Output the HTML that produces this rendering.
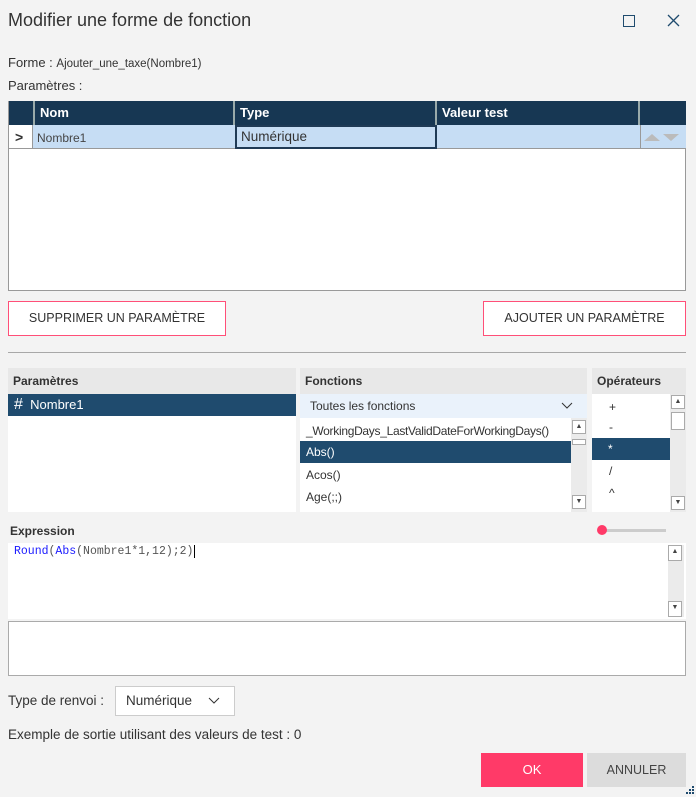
<!DOCTYPE html>
<html><head><meta charset="utf-8"><style>
*{box-sizing:border-box;margin:0;padding:0}
body{width:696px;height:797px;background:#f3f3f3;font-family:"Liberation Sans",sans-serif;color:#333;position:relative;overflow:hidden}
.a{position:absolute}
.t{font-size:12px;white-space:nowrap}
.hd{background:#173753;color:#fff;font-weight:bold;font-size:13px;line-height:24px;padding-left:5px;border-right:2px solid #9aa}
.sb{background:#ebebeb;position:absolute}
.arr{position:absolute;width:14px;height:14px;background:#fff;border:1px solid #aaa;font-size:7px;text-align:center;line-height:12px;color:#444}
.ph{background:#e8e8e8;font-weight:bold;font-size:12px;line-height:26px;padding-left:5px;color:#333}
</style></head><body>
<div class="a" style="left:8px;top:10px;font-size:18px;color:#333">Modifier une forme de fonction</div>
<div class="a" style="left:623px;top:15px;width:12px;height:12px;border:1.5px solid #1f4b6e"></div>
<svg class="a" style="left:667px;top:14px" width="13" height="13"><path d="M1 1L12 12M12 1L1 12" stroke="#1f4b6e" stroke-width="1.3"/></svg>
<div class="a t" style="left:8px;top:55px;font-size:13px">Forme : <span style="font-size:11.5px">Ajouter_une_taxe(Nombre1)</span></div>
<div class="a t" style="left:8px;top:78px;font-size:13px">Paramètres :</div>

<div class="a" style="left:8px;top:101px;width:678px;height:190px;background:#fff;border:1px solid #999"></div>
<div class="a" style="left:9px;top:101px;width:677px;height:24px;background:#173753"></div>
<div class="a hd" style="left:33px;top:101px;width:202px;border-left:2px solid #9aa">Nom</div>
<div class="a hd" style="left:235px;top:101px;width:202px">Type</div>
<div class="a hd" style="left:437px;top:101px;width:203px">Valeur test</div>
<div class="a" style="left:9px;top:125px;width:24px;height:24px;background:#fff;border-right:1px solid #999;border-bottom:1px solid #999;font-size:14px;font-weight:bold;line-height:24px;padding-left:6px">&gt;</div>
<div class="a" style="left:33px;top:125px;width:653px;height:24px;background:#c6ddf4;border-bottom:1px solid #999"></div>
<div class="a t" style="left:37px;top:131px;font-size:12px;color:#444">Nombre1</div>
<div class="a" style="left:235px;top:125px;width:202px;height:24px;border:2px solid #1f3a55;font-size:13.5px;line-height:20px;padding-left:4px;color:#333">Numérique</div>
<div class="a" style="left:640px;top:125px;width:1px;height:24px;background:#999"></div>
<svg class="a" style="left:643px;top:132px" width="40" height="10"><path d="M1 9L9 2L17 9Z M20 2L36 2L28 9Z" fill="#bbb"/></svg>

<div class="a" style="left:8px;top:301px;width:218px;height:35px;background:#fff;border:1px solid #ff4f78;font-size:12.5px;text-align:center;line-height:33px;color:#333">SUPPRIMER UN PARAMÈTRE</div>
<div class="a" style="left:483px;top:301px;width:203px;height:35px;background:#fff;border:1px solid #ff4f78;font-size:12.5px;text-align:center;line-height:33px;color:#333">AJOUTER UN PARAMÈTRE</div>
<div class="a" style="left:8px;top:352px;width:678px;height:1px;background:#a8a8a8"></div>

<div class="a" style="left:8px;top:368px;width:288px;height:144px;background:#fff"></div>
<div class="a ph" style="left:8px;top:368px;width:288px">Paramètres</div>
<div class="a" style="left:8px;top:394px;width:288px;height:22px;background:#1f4b6e;color:#fff;font-size:13px;line-height:22px;padding-left:6px"><span style="font-size:16px;font-weight:300">#</span>&nbsp; Nombre1</div>

<div class="a" style="left:300px;top:368px;width:287px;height:144px;background:#fff"></div>
<div class="a ph" style="left:300px;top:368px;width:287px">Fonctions</div>
<div class="a" style="left:300px;top:394px;width:287px;height:24px;background:#eaf2fb;font-size:12px;line-height:24px;padding-left:10px">Toutes les fonctions</div>
<svg class="a" style="left:561px;top:402px" width="12" height="8"><path d="M1 1L6 6L11 1" stroke="#333" fill="none"/></svg>
<div class="a t" style="left:306px;top:424px;font-size:12px;letter-spacing:-.3px">_WorkingDays_LastValidDateForWorkingDays()</div>
<div class="a" style="left:300px;top:441px;width:271px;height:22px;background:#1f4b6e;color:#fff;font-size:12px;line-height:22px;padding-left:6px">Abs()</div>
<div class="a t" style="left:306px;top:468px">Acos()</div>
<div class="a t" style="left:306px;top:490px">Age(;;)</div>
<div class="sb" style="left:571px;top:418px;width:16px;height:94px"></div>
<div class="arr" style="left:572px;top:420px">▲</div>
<div class="arr" style="left:572px;top:439px;height:6px"></div>
<div class="arr" style="left:572px;top:495px">▼</div>

<div class="a" style="left:592px;top:368px;width:94px;height:144px;background:#fff"></div>
<div class="a ph" style="left:592px;top:368px;width:94px">Opérateurs</div>
<div class="a t" style="left:609px;top:400px">+</div>
<div class="a t" style="left:609px;top:420px">-</div>
<div class="a" style="left:592px;top:438px;width:78px;height:22px;background:#1f4b6e;color:#fff;font-size:12px;line-height:22px;padding-left:16px">*</div>
<div class="a t" style="left:609px;top:464px">/</div>
<div class="a t" style="left:609px;top:486px">^</div>
<div class="sb" style="left:670px;top:394px;width:16px;height:118px"></div>
<div class="arr" style="left:671px;top:395px">▲</div>
<div class="arr" style="left:671px;top:412px;height:18px"></div>
<div class="arr" style="left:671px;top:496px">▼</div>

<div class="a" style="left:10px;top:524px;font-size:12px;font-weight:bold;color:#333">Expression</div>
<div class="a" style="left:601px;top:529px;width:65px;height:3px;background:#ccc"></div>
<div class="a" style="left:597px;top:525px;width:10px;height:10px;border-radius:50%;background:#ff3a68"></div>

<div class="a" style="left:8px;top:543px;width:678px;height:76px;background:#fff"></div>
<div class="a" style="left:14px;top:545px;font-family:'Liberation Mono',monospace;font-size:11.5px;color:#555;white-space:nowrap"><span style="color:#1a1aff">Round</span>(<span style="color:#1a1aff">Abs</span>(Nombre1*1,12);2)<span style="border-left:1px solid #000;margin-left:1px"></span></div>
<div class="sb" style="left:668px;top:545px;width:16px;height:72px"></div>
<div class="arr" style="left:668px;top:545px;height:16px">▲</div>
<div class="arr" style="left:668px;top:601px;height:16px">▼</div>

<div class="a" style="left:8px;top:621px;width:678px;height:55px;background:#fff;border:1px solid #aaa"></div>

<div class="a t" style="left:8px;top:693px;font-size:13.5px">Type de renvoi :</div>
<div class="a" style="left:115px;top:686px;width:120px;height:30px;background:#fff;border:1px solid #ccc;font-size:13.5px;line-height:28px;padding-left:10px">Numérique</div>
<svg class="a" style="left:208px;top:697px" width="12" height="8"><path d="M1 1L6 6L11 1" stroke="#333" fill="none"/></svg>
<div class="a t" style="left:8px;top:727px;font-size:13.5px">Exemple de sortie utilisant des valeurs de test : 0</div>

<div class="a" style="left:481px;top:753px;width:102px;height:34px;background:#ff3a68;color:#fff;font-size:13px;text-align:center;line-height:34px">OK</div>
<div class="a" style="left:587px;top:753px;width:99px;height:34px;background:#dcdcdc;color:#444;font-size:12.5px;text-align:center;line-height:34px">ANNULER</div>
<svg class="a" style="left:685px;top:785px" width="10" height="10"><g fill="#1f4b6e"><rect x="7" y="1" width="2" height="2"/><rect x="4" y="4" width="2" height="2"/><rect x="7" y="4" width="2" height="2"/><rect x="1" y="7" width="2" height="2"/><rect x="4" y="7" width="2" height="2"/><rect x="7" y="7" width="2" height="2"/></g></svg>
</body></html>
